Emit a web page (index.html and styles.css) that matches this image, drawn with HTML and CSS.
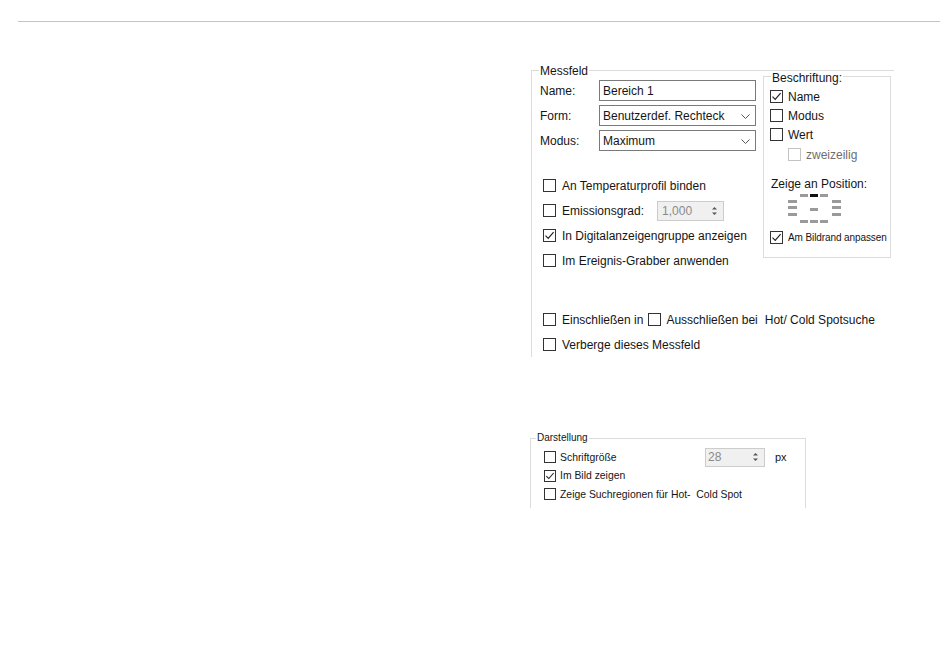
FILE: index.html
```html
<!DOCTYPE html>
<html lang="de">
<head>
<meta charset="utf-8">
<title>Messfeld</title>
<link rel="stylesheet" href="styles.css">
</head>
<body>
<div class="topline"></div>
<div class="page">
  <section class="group messfeld">
    <span class="group-title mf-title">Messfeld</span>
    <div class="mf-left">
      <div class="form-row">
        <span class="form-label">Name:</span>
        <div class="textbox">Bereich 1</div>
      </div>
      <div class="form-row">
        <span class="form-label">Form:</span>
        <div class="combo"><span>Benutzerdef. Rechteck</span><svg class="chev" width="9" height="5" viewBox="0 0 9 5"><path d="M0.5 0.5 L4.5 4.5 L8.5 0.5" fill="none" stroke="#555" stroke-width="1"/></svg></div>
      </div>
      <div class="form-row">
        <span class="form-label">Modus:</span>
        <div class="combo"><span>Maximum</span><svg class="chev" width="9" height="5" viewBox="0 0 9 5"><path d="M0.5 0.5 L4.5 4.5 L8.5 0.5" fill="none" stroke="#555" stroke-width="1"/></svg></div>
      </div>

      <div class="checks">
        <div class="cb-row"><span class="cb"></span><span>An Temperaturprofil binden</span></div>
        <div class="cb-row"><span class="cb"></span><span>Emissionsgrad:</span>
          <div class="spin spin-emi"><span class="spin-val">1,000</span><span class="spin-btn"><svg width="7" height="12" viewBox="0 0 7 12"><path d="M1 4.5 L3.5 2 L6 4.5 Z" fill="#555"/><path d="M1 7.5 L3.5 10 L6 7.5 Z" fill="#555"/></svg></span></div>
        </div>
        <div class="cb-row"><span class="cb"><svg width="11" height="11" viewBox="0 0 11 11"><path d="M1.5 5.6 L4.2 8.3 L9.6 2.2" fill="none" stroke="#222" stroke-width="1.2"/></svg></span><span>In Digitalanzeigengruppe anzeigen</span></div>
        <div class="cb-row"><span class="cb"></span><span>Im Ereignis-Grabber anwenden</span></div>
      </div>

      <div class="checks checks-lower">
        <div class="cb-row"><span class="cb"></span><span>Einschließen in</span><span class="cb cb-inline"></span><span>Ausschließen bei</span><span class="hot">Hot/ Cold Spotsuche</span></div>
        <div class="cb-row"><span class="cb"></span><span>Verberge dieses Messfeld</span></div>
      </div>
    </div>

    <section class="group bs">
      <span class="group-title bs-title">Beschriftung:</span>
      <div class="bs-row"><span class="cb"><svg width="11" height="11" viewBox="0 0 11 11"><path d="M1.5 5.6 L4.2 8.3 L9.6 2.2" fill="none" stroke="#222" stroke-width="1.2"/></svg></span><span>Name</span></div>
      <div class="bs-row"><span class="cb"></span><span>Modus</span></div>
      <div class="bs-row"><span class="cb"></span><span>Wert</span></div>
      <div class="bs-row indent"><span class="cb disabled"></span><span>zweizeilig</span></div>
      <div class="bs-pos">Zeige an Position:</div>
      <svg class="pos-grid" width="55" height="30" viewBox="0 0 55 30">
        <rect x="13" y="1" width="8" height="3" fill="#9a9a9a"/>
        <rect x="23" y="1" width="8" height="3" fill="#111"/>
        <rect x="33" y="1" width="8" height="3" fill="#9a9a9a"/>
        <rect x="1" y="7" width="9" height="3" fill="#9a9a9a"/>
        <rect x="1" y="13" width="9" height="3" fill="#9a9a9a"/>
        <rect x="1" y="20" width="9" height="3" fill="#9a9a9a"/>
        <rect x="45" y="7" width="9" height="3" fill="#9a9a9a"/>
        <rect x="45" y="13" width="9" height="3" fill="#9a9a9a"/>
        <rect x="45" y="20" width="9" height="3" fill="#9a9a9a"/>
        <rect x="23" y="15" width="8" height="3" fill="#9a9a9a"/>
        <rect x="13" y="27" width="8" height="3" fill="#9a9a9a"/>
        <rect x="23" y="27" width="8" height="3" fill="#9a9a9a"/>
        <rect x="33" y="27" width="8" height="3" fill="#9a9a9a"/>
      </svg>
      <div class="bs-row small"><span class="cb"><svg width="11" height="11" viewBox="0 0 11 11"><path d="M1.5 5.6 L4.2 8.3 L9.6 2.2" fill="none" stroke="#222" stroke-width="1.2"/></svg></span><span>Am Bildrand anpassen</span></div>
    </section>
  </section>

  <section class="group ds">
    <span class="group-title ds-title">Darstellung</span>
    <div class="ds-row">
      <span class="cb"></span><span class="ds-label">Schriftgröße</span>
      <div class="spin spin-font"><span class="spin-val">28</span><span class="spin-btn"><svg width="7" height="12" viewBox="0 0 7 12"><path d="M1 4.5 L3.5 2 L6 4.5 Z" fill="#555"/><path d="M1 7.5 L3.5 10 L6 7.5 Z" fill="#555"/></svg></span></div>
      <span class="unit">px</span>
    </div>
    <div class="ds-row"><span class="cb"><svg width="10" height="10" viewBox="0 0 11 11"><path d="M1.5 5.6 L4.2 8.3 L9.6 2.2" fill="none" stroke="#222" stroke-width="1.2"/></svg></span><span>Im Bild zeigen</span></div>
    <div class="ds-row"><span class="cb"></span><span>Zeige Suchregionen für Hot-&nbsp; Cold Spot</span></div>
  </section>
</div>
</body>
</html>
```

FILE: styles.css
```css
body {
  margin: 0;
  font-family: "Liberation Sans", Arial, sans-serif;
  font-size: 12px;
  color: #151515;
  background: #fff;
}

.topline {
  height: 1px;
  background: #c4c4c4;
  margin: 21px 10px 0 18px;
}

.page {
  padding-left: 531px;
}

.group {
  position: relative;
  box-sizing: border-box;
  border: 1px solid #dcdcdc;
}

.group-title {
  position: absolute;
  left: 7px;
  padding: 0 1px;
  background: #fff;
  line-height: 14px;
  white-space: nowrap;
}

/* Messfeld */
.messfeld {
  margin-top: 48px;
  width: 363px;
  height: 287px;
  border-right: none;
  border-bottom: none;
  display: flex;
  align-items: flex-start;
}

.mf-title {
  top: -7px;
}

.mf-left {
  flex: none;
  width: 231px;
  box-sizing: border-box;
  padding: 9px 0 0 8px;
}

.form-row {
  display: flex;
  align-items: center;
  height: 21px;
  margin-bottom: 4px;
}

.form-label {
  flex: none;
  width: 59px;
}

.textbox,
.combo {
  flex: none;
  width: 157px;
  height: 21px;
  box-sizing: border-box;
  border: 1px solid #7a7a7a;
  background: #fff;
  display: flex;
  align-items: center;
  padding-left: 3px;
}

.combo {
  justify-content: space-between;
  padding-right: 5px;
}

.chev {
  display: block;
  margin-top: 1px;
}

.checks {
  margin-top: 22px;
}

.checks-lower {
  margin-top: 34px;
}

.cb-row {
  display: flex;
  align-items: center;
  height: 25px;
  padding-left: 3px;
  white-space: nowrap;
}

.cb {
  flex: none;
  width: 13px;
  height: 13px;
  box-sizing: border-box;
  border: 1px solid #333;
  background: #fff;
  margin-right: 6px;
  display: flex;
  align-items: center;
  justify-content: center;
}

.cb svg {
  display: block;
}

.cb.disabled {
  border-color: #c3c3c3;
}

.cb-inline {
  margin-left: 5px;
  margin-right: 5px;
}

.hot {
  margin-left: 7px;
}

/* Spinners */
.spin {
  flex: none;
  box-sizing: border-box;
  border: 1px solid #cccccc;
  background: #f0f0f0;
  display: flex;
  align-items: center;
}

.spin-emi {
  margin-left: 13px;
  width: 67px;
  height: 20px;
}

.spin-val {
  flex: 1;
  padding-left: 4px;
  color: #8a8a8a;
}

.spin-btn {
  width: 17px;
  height: 100%;
  display: flex;
  align-items: center;
  justify-content: center;
}

.spin-btn svg {
  display: block;
}

/* Beschriftung */
.bs {
  flex: none;
  margin-top: 5px;
  width: 128px;
  height: 182px;
  padding: 10px 0 0 6px;
}

.bs-title {
  top: -6px;
}

.bs-row {
  display: flex;
  align-items: center;
  height: 19px;
  white-space: nowrap;
}

.bs .cb {
  margin-right: 5px;
}

.bs-row.indent {
  height: 21px;
  padding-left: 18px;
  color: #6d6d6d;
}

.bs-pos {
  margin-top: 12px;
  padding-left: 1px;
  line-height: 14px;
}

.pos-grid {
  display: block;
  margin: 2px 0 0 17px;
}

.bs-row.small {
  margin-top: 5px;
  font-size: 10px;
  letter-spacing: -0.1px;
}

/* Darstellung */
.ds {
  margin-top: 81px;
  margin-left: -1px;
  width: 276px;
  height: 70px;
  border-bottom: none;
  padding: 9px 0 0 13px;
  font-size: 10.4px;
}

.ds-title {
  top: -7px;
  left: 5px;
  line-height: 12px;
  font-size: 10px;
}

.ds-row {
  display: flex;
  align-items: center;
  height: 18.5px;
  white-space: nowrap;
}

.ds .cb {
  width: 12px;
  height: 12px;
  margin-right: 4px;
}

.ds-label {
  flex: none;
  width: 145px;
}

.spin-font {
  width: 60px;
  height: 19px;
  font-size: 12px;
}

.spin-font .spin-val {
  padding-left: 2px;
}

.unit {
  margin-left: 10px;
  font-size: 11px;
}
```
